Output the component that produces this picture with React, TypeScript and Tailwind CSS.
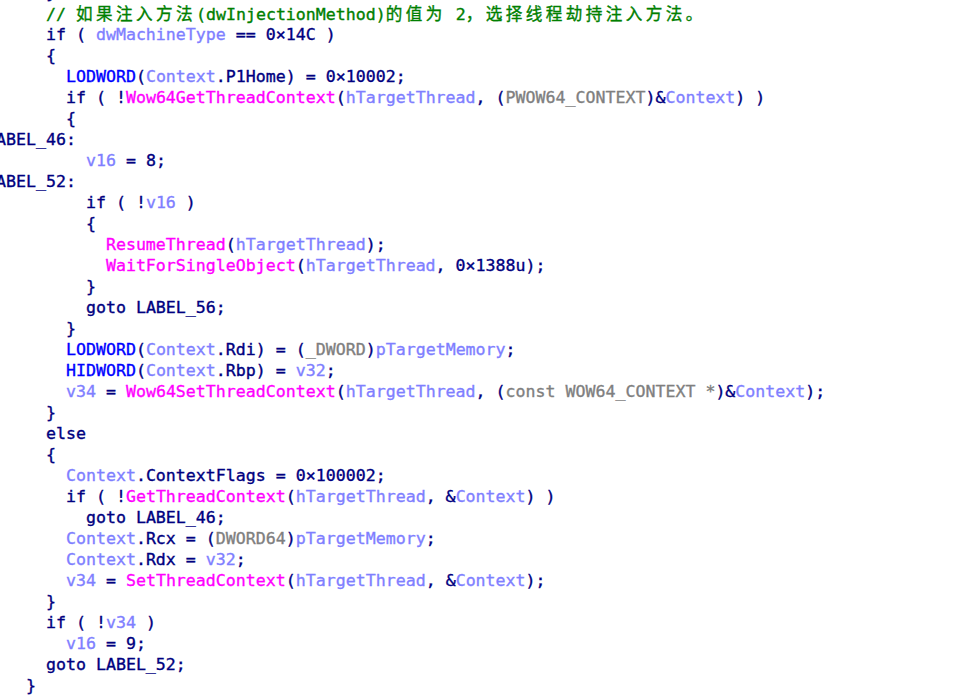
import React from "react";

type Tok = [string, string?];

// colour classes, IDA-ish palette
const N = "text-[#000080]"; // plain code / keywords
const V = "text-[#7f7fff]"; // locals / globals
const F = "text-[#ff00ff]"; // imported functions
const M = "text-[#0000ff]"; // macros like LODWORD
const T = "text-[#7f7f7f]"; // types
const C = "text-[#008000]"; // comments

const lines: { indent: number; label?: boolean; toks: Tok[] }[] = [
  { indent: 4, toks: [["}", N]] },
  {
    indent: 4,
    toks: [["// 如果注入方法(dwInjectionMethod)的值为 2，选择线程劫持注入方法。", C]],
  },
  { indent: 4, toks: [["if ( ", N], ["dwMachineType", V], [" == 0×14C )", N]] },
  { indent: 4, toks: [["{", N]] },
  { indent: 6, toks: [["LODWORD", M], ["(", N], ["Context", V], [".P1Home) = 0×10002;", N]] },
  {
    indent: 6,
    toks: [
      ["if ( !", N],
      ["Wow64GetThreadContext", F],
      ["(", N],
      ["hTargetThread", V],
      [", (", N],
      ["PWOW64_CONTEXT", T],
      [")&", N],
      ["Context", V],
      [") )", N],
    ],
  },
  { indent: 6, toks: [["{", N]] },
  { indent: 0, label: true, toks: [["LABEL_46:", N]] },
  { indent: 8, toks: [["v16", V], [" = 8;", N]] },
  { indent: 0, label: true, toks: [["LABEL_52:", N]] },
  { indent: 8, toks: [["if ( !", N], ["v16", V], [" )", N]] },
  { indent: 8, toks: [["{", N]] },
  { indent: 10, toks: [["ResumeThread", F], ["(", N], ["hTargetThread", V], [");", N]] },
  {
    indent: 10,
    toks: [["WaitForSingleObject", F], ["(", N], ["hTargetThread", V], [", 0×1388u);", N]],
  },
  { indent: 8, toks: [["}", N]] },
  { indent: 8, toks: [["goto LABEL_56;", N]] },
  { indent: 6, toks: [["}", N]] },
  {
    indent: 6,
    toks: [
      ["LODWORD", M],
      ["(", N],
      ["Context", V],
      [".Rdi) = (", N],
      ["_DWORD", T],
      [")", N],
      ["pTargetMemory", V],
      [";", N],
    ],
  },
  { indent: 6, toks: [["HIDWORD", M], ["(", N], ["Context", V], [".Rbp) = ", N], ["v32", V], [";", N]] },
  {
    indent: 6,
    toks: [
      ["v34", V],
      [" = ", N],
      ["Wow64SetThreadContext", F],
      ["(", N],
      ["hTargetThread", V],
      [", (", N],
      ["const WOW64_CONTEXT *", T],
      [")&", N],
      ["Context", V],
      [");", N],
    ],
  },
  { indent: 4, toks: [["}", N]] },
  { indent: 4, toks: [["else", N]] },
  { indent: 4, toks: [["{", N]] },
  { indent: 6, toks: [["Context", V], [".ContextFlags = 0×100002;", N]] },
  {
    indent: 6,
    toks: [
      ["if ( !", N],
      ["GetThreadContext", F],
      ["(", N],
      ["hTargetThread", V],
      [", &", N],
      ["Context", V],
      [") )", N],
    ],
  },
  { indent: 8, toks: [["goto LABEL_46;", N]] },
  {
    indent: 6,
    toks: [["Context", V], [".Rcx = (", N], ["DWORD64", T], [")", N], ["pTargetMemory", V], [";", N]],
  },
  { indent: 6, toks: [["Context", V], [".Rdx = ", N], ["v32", V], [";", N]] },
  {
    indent: 6,
    toks: [
      ["v34", V],
      [" = ", N],
      ["SetThreadContext", F],
      ["(", N],
      ["hTargetThread", V],
      [", &", N],
      ["Context", V],
      [");", N],
    ],
  },
  { indent: 4, toks: [["}", N]] },
  { indent: 4, toks: [["if ( !", N], ["v34", V], [" )", N]] },
  { indent: 6, toks: [["v16", V], [" = 9;", N]] },
  { indent: 4, toks: [["goto LABEL_52;", N]] },
  { indent: 2, toks: [["}", N]] },
];

// wide chars take two cells in the listing
const isWide = (ch: string) => /[\u3000-\u9fff\uff00-\uffef]/.test(ch);

function Text({ s }: { s: string }) {
  const parts: React.ReactNode[] = [];
  let buf = "";
  Array.from(s).forEach((ch, i) => {
    if (isWide(ch)) {
      if (buf) parts.push(buf);
      buf = "";
      parts.push(
        <span
          key={i}
          className="inline-block w-[20px] text-left"
          style={{ fontFamily: '"Noto Sans CJK SC", sans-serif' }}
        >
          {ch}
        </span>
      );
    } else buf += ch;
  });
  if (buf) parts.push(buf);
  return <>{parts}</>;
}

export default function App() {
  return (
    <div className="w-[972px] h-[697px] overflow-hidden bg-white">
      <div className="pl-[6px] -mt-[18px] font-['DejaVu_Sans_Mono',monospace] text-[16.6px] leading-[21px] whitespace-pre [-webkit-text-stroke:0.35px_currentColor]">
        {lines.map((l, i) => (
          <div key={i} className={l.label ? "-ml-[20px] h-[21px]" : "h-[21px]"}>
            {" ".repeat(l.indent)}
            {l.toks.map(([t, c], j) => (
              <span key={j} className={c}>
                <Text s={t} />
              </span>
            ))}
          </div>
        ))}
      </div>
    </div>
  );
}
